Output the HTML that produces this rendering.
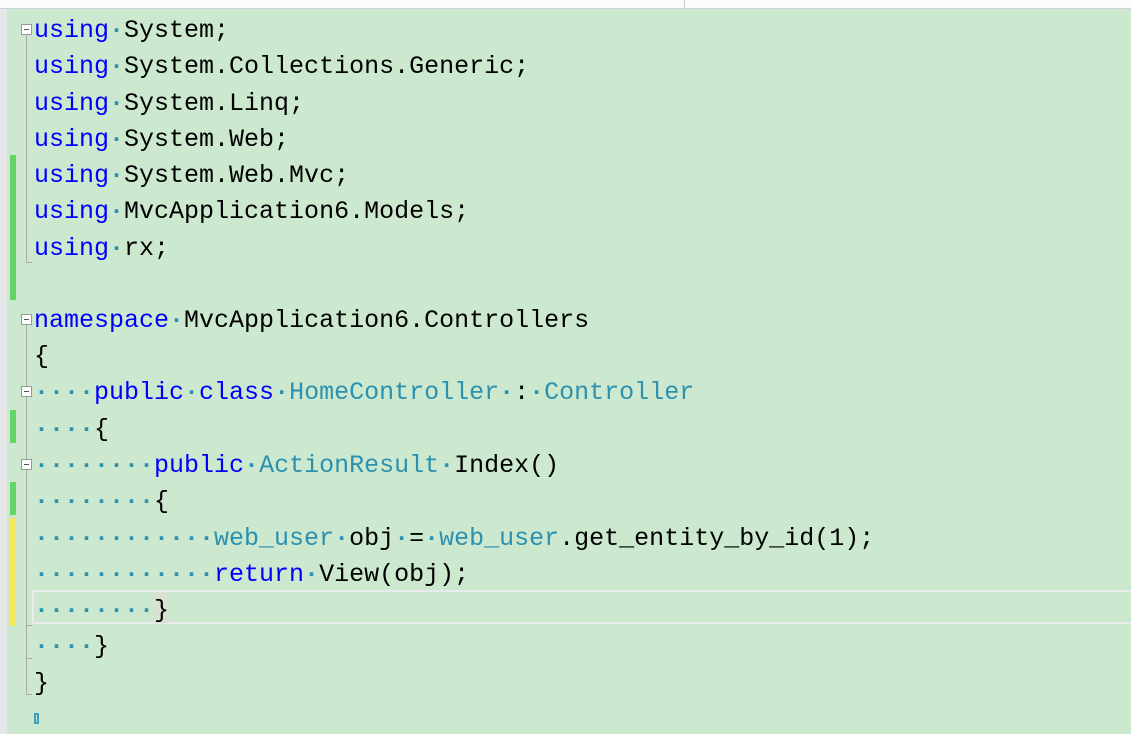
<!DOCTYPE html>
<html><head><meta charset="utf-8"><style>
body{margin:0;width:1131px;height:734px;overflow:hidden;background:#cce8cf;position:relative;font-family:"Liberation Mono","Noto Serif CJK SC",monospace}
.top{position:absolute;left:0;top:0;width:1131px;height:8px;background:#fbfbfb;border-bottom:1px solid #ccced8}
.gut{position:absolute;left:0;top:9px;width:7px;height:725px;background:#e6e7e8}
.ln{position:absolute;left:34px;height:36px;line-height:36px;font-size:25px;white-space:pre;color:#000;margin-top:2px}
.k{color:#0000ff}.t{color:#2b91af}.d{color:#2b91af;font-weight:bold}
.bar{position:absolute;left:10px;width:6px}
.fold{position:absolute;left:21px;width:9px;height:9px;border:1px solid #999;background:#fff}
.fold:after{content:"";position:absolute;left:2px;top:4px;width:5px;height:1px;background:#555}
.vl{position:absolute;left:26px;width:1px;background:#aaa}
.hl{position:absolute;width:6px;height:1px;background:#aaa;left:26px}
</style></head><body>
<div class="top"><span style="position:absolute;left:684px;top:0;width:1px;height:8px;background:#ccc"></span></div>
<div class="gut"></div>
<div class="bar" style="top:155px;height:145px;background:#63d567"></div>
<div class="bar" style="top:410px;height:33px;background:#63d567"></div>
<div class="bar" style="top:482px;height:33px;background:#63d567"></div>
<div class="bar" style="top:518px;height:108px;background:#f2ea5c"></div>
<div style="position:absolute;left:32px;top:590px;width:1099px;height:34px;border:2px solid #e9ecea;box-sizing:border-box;border-right:none"></div>
<div style="position:absolute;left:154px;top:592px;width:14px;height:31px;background:#d9e2d0"></div>
<div class="fold" style="top:24px"></div><div class="vl" style="top:35px;height:227px"></div><div class="hl" style="top:262px"></div>
<div class="fold" style="top:314px"></div><div class="vl" style="top:325px;height:369px"></div><div class="hl" style="top:694px"></div>
<div class="fold" style="top:386px"></div><div class="hl" style="top:658px"></div>
<div class="fold" style="top:459px"></div><div class="hl" style="top:625px"></div>
<div class="ln" style="top:11px"><span class="k">using</span><span class="d">·</span>System;</div>
<div class="ln" style="top:47px"><span class="k">using</span><span class="d">·</span>System.Collections.Generic;</div>
<div class="ln" style="top:84px"><span class="k">using</span><span class="d">·</span>System.Linq;</div>
<div class="ln" style="top:120px"><span class="k">using</span><span class="d">·</span>System.Web;</div>
<div class="ln" style="top:156px"><span class="k">using</span><span class="d">·</span>System.Web.Mvc;</div>
<div class="ln" style="top:192px"><span class="k">using</span><span class="d">·</span>MvcApplication6.Models;</div>
<div class="ln" style="top:229px"><span class="k">using</span><span class="d">·</span>rx;</div>
<div class="ln" style="top:301px"><span class="k">namespace</span><span class="d">·</span>MvcApplication6.Controllers</div>
<div class="ln" style="top:337px">{</div>
<div class="ln" style="top:373px"><span class="d">····</span><span class="k">public</span><span class="d">·</span><span class="k">class</span><span class="d">·</span><span class="t">HomeController</span><span class="d">·</span>:<span class="d">·</span><span class="t">Controller</span></div>
<div class="ln" style="top:410px"><span class="d">····</span>{</div>
<div class="ln" style="top:446px"><span class="d">········</span><span class="k">public</span><span class="d">·</span><span class="t">ActionResult</span><span class="d">·</span>Index()</div>
<div class="ln" style="top:482px"><span class="d">········</span>{</div>
<div class="ln" style="top:519px"><span class="d">············</span><span class="t">web_user</span><span class="d">·</span>obj<span class="d">·</span>=<span class="d">·</span><span class="t">web_user</span>.get_entity_by_id(1);</div>
<div class="ln" style="top:555px"><span class="d">············</span><span class="k">return</span><span class="d">·</span>View(obj);</div>
<div class="ln" style="top:591px"><span class="d">········</span>}</div>
<div class="ln" style="top:627px"><span class="d">····</span>}</div>
<div class="ln" style="top:664px">}</div>
<div style="position:absolute;left:34px;top:713px;width:5px;height:11px;border:2px solid #3a9fbf;box-sizing:border-box"></div>
</body></html>
